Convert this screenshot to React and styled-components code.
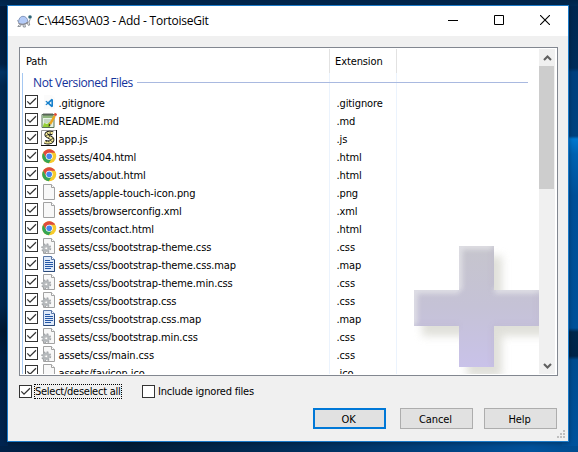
import React from "react";
import styled, { createGlobalStyle, css } from "styled-components";

const GlobalStyle = createGlobalStyle`
  * { box-sizing: border-box; }
  body { margin: 0; overflow: hidden; }
`;

const Desktop = styled.div`
  width: 578px;
  height: 452px;
  padding: 5px 9px 10px 7px;
  background:
    linear-gradient(180deg, #002750 0, #002c59 62px, #003f7f 66px, #00427f 130px, #0078d0 133px, #0062b2 148px, #004f98 190px, #005199 322px, #00274c 326px, #002448 350px, #004c90 354px, #00529c 100%) right / 16px 440px no-repeat,
    linear-gradient(180deg, #001c3d 0, #002146 58px, #003364 66px, #00284f 80px, #002d59 230px, #00264d 300px, #001831 325px, #001f42 350px, #002450 100%) left / 8px 440px no-repeat,
    linear-gradient(180deg, #002449, #002b55) top / 100% 6px no-repeat,
    linear-gradient(90deg, #002148 0, #001d38 22%, #002f5c 52%, #004484 78%, #00529c 92%, #004c90 100%);
`;

const Window = styled.main`
  display: flex;
  flex-direction: column;
  width: 562px;
  height: 437px;
  border: 1px solid #1b7ac8;
  background: #f0f0f0;
  color: #000;
  font: 11px "DejaVu Sans Condensed", "DejaVu Sans", sans-serif;
  font-stretch: condensed;
  letter-spacing: -0.11px;
  box-shadow: 0 1px 5px rgba(0, 0, 0, 0.35);
`;

const TitleBar = styled.header`
  display: flex;
  align-items: center;
  flex: none;
  height: 30px;
  padding-left: 8px;
  background: #fff;
`;

const Title = styled.h1`
  flex: 1;
  margin: 0 0 0 5px;
  font: 12px/18px "Open Sans", "Noto Sans", sans-serif;
  letter-spacing: -0.24px;
  white-space: pre;
`;

const CaptionButton = styled.button`
  display: grid;
  place-items: center;
  width: 46px;
  height: 30px;
  padding: 0 0 2px;
  border: 0;
  background: transparent;
`;

const ListFrame = styled.section`
  position: relative;
  display: flex;
  flex: none;
  width: 539px;
  height: 329px;
  margin: 11px 0 0 11px;
  padding: 1px;
  border: 1px solid #828790;
  background: #fff;
`;

const ListView = styled.div`
  flex: 1;
  height: 325px;
  overflow: hidden;
`;

const columns = css`
  display: grid;
  grid-template-columns: 309px 67px 1fr;
`;

const HeaderRow = styled.div`
  ${columns}
  height: 24px;
`;

const HeaderCell = styled.div`
  padding: 0 0 0 5px;
  border-right: ${p => (p.$last ? 0 : "1px solid #e2e2e2")};
  line-height: 25px;
`;

const ListBody = styled.div`
  position: relative;
  height: 301px;
  margin-left: 1px;
  border-left: 1px solid #a5c8f2;
  background:
    linear-gradient(#ebf3fd, #ebf3fd) 306px 0 / 1px 100% no-repeat,
    linear-gradient(#ebf3fd, #ebf3fd) 373px 0 / 1px 100% no-repeat;
  overflow: hidden;
`;

const Watermark = styled.svg`
  position: absolute;
  left: 380px;
  top: 173px;
  width: 136px;
  height: 128px;
`;

const GroupHeader = styled.div`
  display: flex;
  align-items: center;
  gap: 4px;
  height: 21px;
  padding: 0 11px 1px 10px;
  color: #12329b;
  font: 12px/18px "Open Sans", "Noto Sans", sans-serif;
  letter-spacing: -0.41px;

  &::after {
    content: "";
    flex: 1;
    height: 1px;
    background: #a9b9e0;
    margin-top: -1px;
  }
`;

const FileRow = styled.div`
  position: relative;
  display: grid;
  grid-template-columns: 13px 3px 15px 2.5px 278px 1fr;
  align-items: start;
  height: 18px;
  padding-left: 2px;
  line-height: 20px;
  white-space: nowrap;
`;

const FileIcon = styled.svg`
  grid-column: 3;
  width: 16px;
  height: 16px;
`;

const FileName = styled.span`
  grid-column: 5;
`;

const Box = styled.span`
  display: block;
  flex: none;
  width: 13px;
  height: 13px;
  margin-top: ${p => p.$top || 0}px;
  border: 1px solid #333;
  background: #fff;

  svg {
    display: block;
  }
`;

const ScrollBar = styled.div`
  display: flex;
  flex-direction: column;
  width: 16px;
  height: 325px;
  margin-right: 1px;
  background: #f0f0f0;
`;

const ScrollButton = styled.div`
  display: grid;
  place-items: center;
  height: 17px;
`;

const Thumb = styled.div`
  width: 15px;
  height: 123px;
  margin-bottom: auto;
  background: #cdcdcd;
`;

const OptionRow = styled.div`
  display: flex;
  align-items: center;
  height: 15px;
  margin: 8px 0 0 11px;
`;

const OptionLabel = styled.span`
  height: 15px;
  margin: 0 0 0 2px;
  padding: 0 1px;
  width: ${p => (p.$focused ? "88px" : "auto")};
  margin-right: ${p => (p.$focused ? "20px" : 0)};
  outline: ${p => (p.$focused ? "1px dotted #000" : "0")};
  outline-offset: -1px;
  line-height: 16px;
  white-space: nowrap;
  letter-spacing: ${p => (p.$focused ? "-0.26px" : "-0.2px")};
`;

const Footer = styled.footer`
  display: flex;
  justify-content: flex-end;
  gap: 11px;
  margin-top: 9px;
  padding-right: 11px;
`;

const DialogButton = styled.button`
  width: 73px;
  height: 21px;
  padding: 1px 2px 0 0;
  border: ${p => (p.$primary ? "2px solid #0078d7" : "1px solid #adadad")};
  margin-right: ${p => (p.$primary ? "3px" : 0)};
  background: #e1e1e1;
  color: #000;
  font: inherit;
  letter-spacing: inherit;
`;

const Grip = styled.svg`
  align-self: flex-end;
  width: 9px;
  height: 9px;
  margin: 1px 2px 0 0;
`;

function CheckBox({ checked, top }) {
  return (
    <Box $top={top}>
      {checked && (
        <svg width="11" height="11" viewBox="0 0 11 11">
          <path d="M1.3 5.4 4 8.2 10 2.2" fill="none" stroke="#333" strokeWidth="1.25" />
        </svg>
      )}
    </Box>
  );
}

function Sheet({ lines }) {
  return (
    <>
      <path d="M2.5.5h8l3 3v12h-11z" fill={lines ? "#dfeafa" : "#f8f8f8"} stroke={lines ? "#5877a8" : "#a2a2a2"} />
      <path d="M10.5.5v3h3" fill="#fff" stroke={lines ? "#5877a8" : "#a2a2a2"} />
    </>
  );
}

const icons = {
  code: (
    <>
      <path d="M3 1h8l3 3v11H3z" fill="#fbfbfb" />
      <path d="m10.6 4.8 1.4.7v7l-1.4.8-3.6-3.4-1.8 1.4-.8-.6 1.6-1.7-1.6-1.7.8-.6L7 8.1zM10.4 7.2 8.4 9l2 1.8z" fill="#1680cc" fillRule="evenodd" />
    </>
  ),
  markdown: (
    <>
      <path d="M1 2.5h12v13H1z" fill="#e7f3e4" stroke="#587458" />
      <path d="M2 3h10v3H2z" fill="#8fb77f" />
      <path d="M3 1v3m2-3v3m2-3v3m2-3v3m2-3v3" stroke="#555" strokeWidth=".9" />
      <path d="M3 8h7M3 10h6" stroke="#a4b9a5" />
      <path d="m2 14 1-3 3 1 3-2v5H2z" fill="#94cf37" />
      <path d="m13.7 3.8-4.6 8.4" stroke="#eba51e" strokeWidth="2.4" />
      <path d="m15 1.4-1.1 2.2" stroke="#dc4935" strokeWidth="2.6" />
      <path d="m7.9 11.8-.3 2.9 2.3-1.6z" fill="#3a3020" />
    </>
  ),
  script: (
    <>
      <path d="M.5.5h15v15H.5z" fill="#fff" stroke="#9a9a9a" />
      <path d="M15.5 0v15.5H0" fill="none" stroke="#111" />
      <path d="M11.8 3.3C8.5 2 4.5 3 5.6 5.3c1.2 2 6.2 2 5.8 4.7-.5 2.7-4.7 3-7.6 1.9" fill="none" stroke="#111" strokeWidth="4" />
      <path d="M11.8 3.3C8.5 2 4.5 3 5.6 5.3c1.2 2 6.2 2 5.8 4.7-.5 2.7-4.7 3-7.6 1.9" fill="none" stroke="#f6ec98" strokeWidth="2.2" />
      <path d="m6 2.5 1 1.6m2-2 .4 1.6M4.5 6.2l2-1m1 2.6 1.2-1.6m1.4 3.2 2-1m-2 2.6 1.8 1m-4.4-1.4.6 1.8m-2.8-2v1.8" stroke="#222" strokeWidth=".8" />
    </>
  ),
  chrome: (
    <>
      <circle cx="8.2" cy="8.2" r="7" fill="#f7cb2d" />
      <path d="M2.15 4.7A7 7 0 0 1 14.25 4.7H8.2L5.1 10z" fill="#df4b3d" />
      <path d="M2.15 4.7A7 7 0 0 0 7.7 15.2L11.2 10 8.2 8.2 5.2 10z" fill="#35a554" />
      <circle cx="8.2" cy="8.2" r="3.5" fill="#fff" />
      <circle cx="8.2" cy="8.2" r="2.8" fill="#4684ee" />
    </>
  ),
  blank: <Sheet />,
  style: (
    <>
      <Sheet />
      <circle cx="5.2" cy="10.3" r="4.2" fill="none" stroke="#a2a5a8" strokeWidth="1.6" strokeDasharray="1.75 1.55" />
      <circle cx="5.2" cy="10.3" r="2.7" fill="#f3f3f3" stroke="#b3b7ba" strokeWidth="2" />
      <circle cx="5.2" cy="10.3" r="1.4" fill="#fff" stroke="#909396" strokeWidth=".6" />
    </>
  ),
  map: (
    <>
      <Sheet lines />
      <path d="M13.5 4v11.5h-11" fill="none" stroke="#294878" />
      <path d="M4 4.5h5M4 6.5h8M4 8.5h8M4 10.5h8M4 12.5h6" stroke="#2658a7" />
    </>
  ),
};

const files = [
  [".gitignore", ".gitignore", "code"],
  ["README.md", ".md", "markdown"],
  ["app.js", ".js", "script"],
  ["assets/404.html", ".html", "chrome"],
  ["assets/about.html", ".html", "chrome"],
  ["assets/apple-touch-icon.png", ".png", "blank"],
  ["assets/browserconfig.xml", ".xml", "blank"],
  ["assets/contact.html", ".html", "chrome"],
  ["assets/css/bootstrap-theme.css", ".css", "style"],
  ["assets/css/bootstrap-theme.css.map", ".map", "map"],
  ["assets/css/bootstrap-theme.min.css", ".css", "style"],
  ["assets/css/bootstrap.css", ".css", "style"],
  ["assets/css/bootstrap.css.map", ".map", "map"],
  ["assets/css/bootstrap.min.css", ".css", "style"],
  ["assets/css/main.css", ".css", "style"],
  ["assets/favicon.ico", ".ico", "blank"],
];

function TortoiseIcon() {
  return (
    <svg width="16" height="16" viewBox="0 0 16 16">
      <path d="M1 7.5 3.5 9M3.5 11.5l-1.7 2h2.5l1-2M7 12l.4 2h2l-.4-2.4M11 10l1.5 2.5 1.2-.5-.7-3 1.2-2.8" fill="#eee" stroke="#858b93" strokeWidth=".9" />
      <path d="M2.5 9.6C2.5 6 4.3 3.3 7 3.3s4.7 2.2 4.9 5.4c-2 3-7 3.8-9.4.9z" fill="#b4cbf8" stroke="#7d90b5" strokeWidth=".9" />
      <path d="M2.5 10c2.5 2.3 7 1.8 9.5-1" fill="none" stroke="#8d8d94" strokeWidth="1.2" />
      <circle cx="14" cy="4" r="1.8" fill="#2d6476" />
    </svg>
  );
}

function Plus() {
  const shape = "M46 0h35v44h60v36H81v41H46V80H1V44h45z";
  return (
    <Watermark viewBox="0 0 136 128">
      <defs>
        <linearGradient id="plusFill" x1="0" y1="0" x2="0" y2="1">
          <stop offset="0" stopColor="#c6c5cd" />
          <stop offset=".5" stopColor="#c5c2d6" />
          <stop offset="1" stopColor="#c9c2e9" />
        </linearGradient>
        <filter id="soft" x="-20%" y="-20%" width="140%" height="140%">
          <feGaussianBlur stdDeviation="4.5" />
        </filter>
        <filter id="bevel">
          <feGaussianBlur stdDeviation="2.4" />
        </filter>
        <clipPath id="view">
          <path d="M0 0h126v128H0z" />
        </clipPath>
        <clipPath id="plusClip">
          <path d={shape} />
        </clipPath>
      </defs>
      <g clipPath="url(#view)" transform="translate(10 0)">
        <path d={shape} transform="translate(8 10)" fill="#d8d8d0" opacity=".8" filter="url(#soft)" />
        <path d={shape} fill="url(#plusFill)" />
        <g clipPath="url(#plusClip)">
          <path d="M46 44V0h35M1 80V44h45M81 44h60" fill="none" stroke="#e6e6ea" strokeWidth="7" opacity=".8" filter="url(#bevel)" />
          <path d="M81 0v44M1 80h45M81 80h60M81 80v41M126 44v36" fill="none" stroke="#bab5c9" strokeWidth="4" opacity=".4" filter="url(#bevel)" />
        </g>
      </g>
    </Watermark>
  );
}

function Chevron({ down }) {
  return (
    <svg width="9" height="8" viewBox="0 0 9 8">
      <path d={down ? "M1 2 4.5 5.5 8 2" : "M1 6 4.5 2.5 8 6"} fill="none" stroke="#606060" strokeWidth="2.1" />
    </svg>
  );
}

export default function App() {
  return (
    <Desktop>
      <GlobalStyle />
      <Window>
        <TitleBar>
          <TortoiseIcon />
          <Title>{"C:\\44563\\A03 - Add - TortoiseGit"}</Title>
          <CaptionButton aria-label="Minimize">
            <svg width="10" height="10"><path d="M0 5.5h10" stroke="#000" /></svg>
          </CaptionButton>
          <CaptionButton aria-label="Maximize">
            <svg width="10" height="10"><path d="M.5.5h9v9h-9z" fill="none" stroke="#000" /></svg>
          </CaptionButton>
          <CaptionButton aria-label="Close">
            <svg width="10" height="10"><path d="m0 0 10 10M10 0 0 10" stroke="#000" strokeWidth="1.1" /></svg>
          </CaptionButton>
        </TitleBar>
        <ListFrame>
          <ListView>
            <HeaderRow>
              <HeaderCell>Path</HeaderCell>
              <HeaderCell>Extension</HeaderCell>
              <HeaderCell $last />
            </HeaderRow>
            <ListBody>
              <Plus />
              <GroupHeader>Not Versioned Files</GroupHeader>
              {files.map(([name, ext, icon]) => (
                <FileRow key={name}>
                  <CheckBox checked top={1} />
                  <FileIcon viewBox="0 0 16 16">{icons[icon]}</FileIcon>
                  <FileName>{name}</FileName>
                  <span>{ext}</span>
                </FileRow>
              ))}
            </ListBody>
          </ListView>
          <ScrollBar>
            <ScrollButton><Chevron /></ScrollButton>
            <Thumb />
            <ScrollButton><Chevron down /></ScrollButton>
          </ScrollBar>
        </ListFrame>
        <OptionRow>
          <CheckBox checked />
          <OptionLabel $focused>Select/deselect all</OptionLabel>
          <CheckBox />
          <OptionLabel>Include ignored files</OptionLabel>
        </OptionRow>
        <Footer>
          <DialogButton $primary>OK</DialogButton>
          <DialogButton>Cancel</DialogButton>
          <DialogButton>Help</DialogButton>
        </Footer>
        <Grip viewBox="0 0 9 9">
          <path d="M6 0h2v2H6zM3 3h2v2H3zM6 3h2v2H6zM0 6h2v2H0zM3 6h2v2H3zM6 6h2v2H6z" fill="#bfbfbf" />
        </Grip>
      </Window>
    </Desktop>
  );
}
